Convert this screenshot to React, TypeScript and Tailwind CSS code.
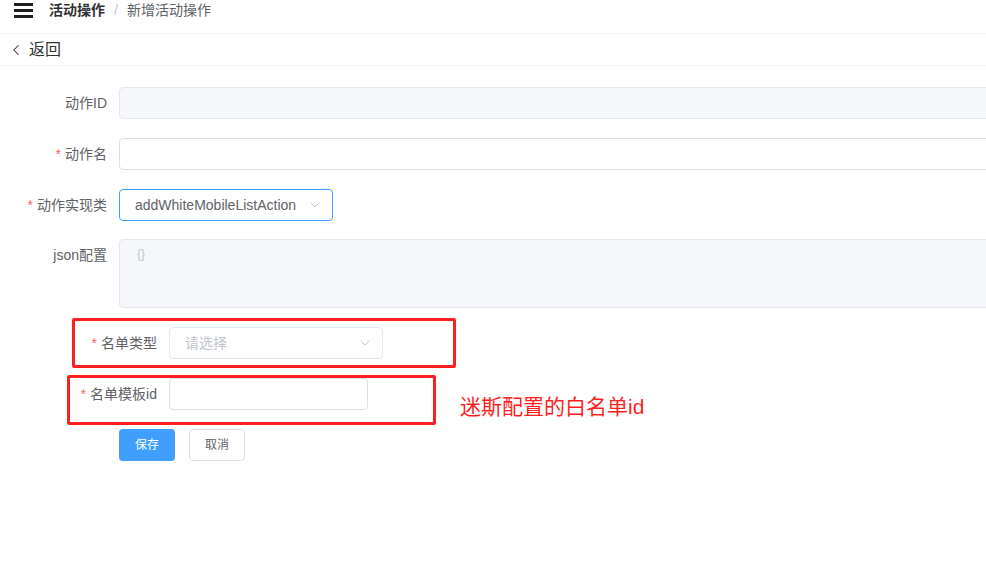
import { ChevronLeft, ChevronDown } from "lucide-react";

const font = { fontFamily: '"Liberation Sans", "Noto Sans CJK SC", sans-serif' };

function Label({ text, required }: { text: string; required?: boolean }) {
  return (
    <div className="w-[119px] shrink-0 pr-3 text-right text-[14px] leading-[32px] text-[#606266]">
      {required && <span className="mr-1 text-[#f56c6c]">*</span>}
      {text}
    </div>
  );
}

function SelectBox({
  value,
  placeholder,
  active,
}: {
  value?: string;
  placeholder?: string;
  active?: boolean;
}) {
  return (
    <div
      className={`flex h-8 w-[214px] items-center justify-between rounded border pl-[15px] pr-[9px] text-[14px] ${
        active ? "border-[#409eff]" : "border-[#e4e7ed]"
      }`}
    >
      <span className={value ? "text-[#606266]" : "text-[#c0c4cc]"}>
        {value ?? placeholder}
      </span>
      <ChevronDown className="h-4 w-4 text-[#c0c4cc]" strokeWidth={1.5} />
    </div>
  );
}

export default function App() {
  return (
    <div className="min-h-screen w-full overflow-hidden bg-white" style={font}>
      {/* 顶部面包屑 */}
      <div className="flex h-[34px] items-start border-b border-[#eef0f3] pt-[2px]">
        <div className="ml-[14px] mt-[1px] flex w-[19px] flex-col gap-[3px]">
          <span className="h-[3px] bg-[#1f1f1f]" />
          <span className="h-[3px] bg-[#1f1f1f]" />
          <span className="h-[3px] bg-[#1f1f1f]" />
        </div>
        <div className="ml-[16px] flex items-center text-[14px] leading-[16px]">
          <span className="font-bold text-[#303133]">活动操作</span>
          <span className="mx-[9px] text-[#c0c4cc]">/</span>
          <span className="text-[#606266]">新增活动操作</span>
        </div>
      </div>

      {/* 返回 */}
      <div className="flex h-[32px] items-center border-b border-[#eef0f3]">
        <ChevronLeft className="ml-[7px] h-[18px] w-[18px] text-[#303133]" strokeWidth={1.4} />
        <span className="ml-[4px] text-[16px] text-[#303133]">返回</span>
      </div>

      {/* 表单 */}
      <div className="pt-[21px]">
        <div className="mb-[19px] flex">
          <Label text="动作ID" />
          <div className="h-8 w-[900px] shrink-0 rounded border border-[#e4e7ed] bg-[#f5f7fa]" />
        </div>
        <div className="mb-[19px] flex">
          <Label text="动作名" required />
          <div className="h-8 w-[900px] shrink-0 rounded border border-[#dcdfe6] bg-white" />
        </div>
        <div className="mb-[18px] flex">
          <Label text="动作实现类" required />
          <SelectBox value="addWhiteMobileListAction" active />
        </div>
        <div className="mb-[19px] flex">
          <Label text="json配置" />
          <div className="h-[69px] w-[900px] shrink-0 rounded border border-[#e4e7ed] bg-[#f5f7fa] px-[17px] py-[5px] text-[12px] text-[#c0c4cc]">
            {"{}"}
          </div>
        </div>

        <div className="relative">
          <div className="mb-[19px] flex pl-[50px]">
            <Label text="名单类型" required />
            <SelectBox placeholder="请选择" />
          </div>
          <div className="mb-[19px] flex pl-[50px]">
            <Label text="名单模板id" required />
            <div className="h-8 w-[199px] rounded border border-[#dcdfe6] bg-white" />
          </div>

          {/* 标注 */}
          <div className="absolute left-[72px] top-[-9px] h-[50px] w-[384px] rounded-[2px] border-[3px] border-[#ff1f1f]" />
          <div className="absolute left-[67px] top-[48px] h-[50px] w-[369px] rounded-[2px] border-[3px] border-[#ff1f1f]" />
          <div className="absolute left-[460px] top-[66px] text-[21px] leading-[28px] text-[#ff1f1f]">
            迷斯配置的白名单id
          </div>
        </div>

        <div className="flex pl-[119px]">
          <button className="h-8 w-[56px] rounded bg-[#409eff] text-[12px] text-white">保存</button>
          <button className="ml-[14px] h-8 w-[56px] rounded border border-[#dcdfe6] bg-white text-[12px] text-[#606266]">
            取消
          </button>
        </div>
      </div>
    </div>
  );
}
